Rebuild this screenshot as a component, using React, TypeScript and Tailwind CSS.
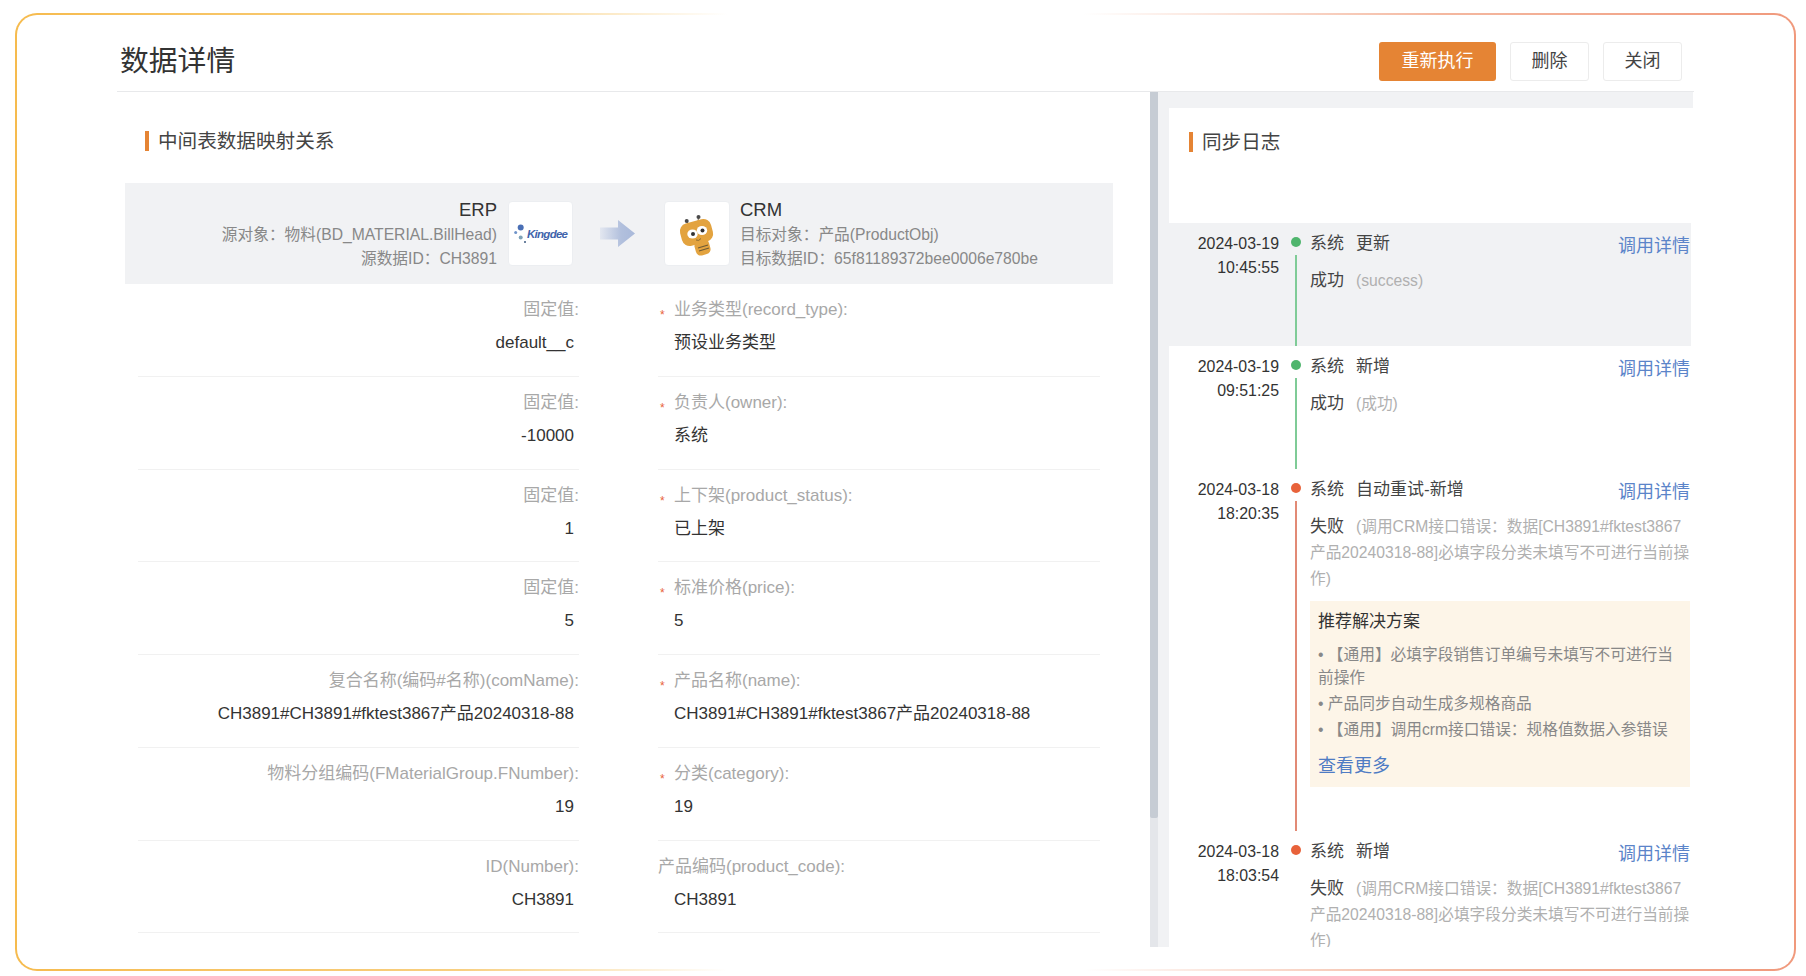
import { ReactNode } from "react";

const FONT = "font-['Liberation_Sans','Noto_Sans_CJK_SC',sans-serif]";

type Row = { label: string; value: string; target: string; targetValue: string; required?: boolean };

const rows: Row[] = [
  { label: "固定值:", value: "default__c", target: "业务类型(record_type):", targetValue: "预设业务类型", required: true },
  { label: "固定值:", value: "-10000", target: "负责人(owner):", targetValue: "系统", required: true },
  { label: "固定值:", value: "1", target: "上下架(product_status):", targetValue: "已上架", required: true },
  { label: "固定值:", value: "5", target: "标准价格(price):", targetValue: "5", required: true },
  {
    label: "复合名称(编码#名称)(comName):",
    value: "CH3891#CH3891#fktest3867产品20240318-88",
    target: "产品名称(name):",
    targetValue: "CH3891#CH3891#fktest3867产品20240318-88",
    required: true,
  },
  { label: "物料分组编码(FMaterialGroup.FNumber):", value: "19", target: "分类(category):", targetValue: "19", required: true },
  { label: "ID(Number):", value: "CH3891", target: "产品编码(product_code):", targetValue: "CH3891" },
];

// 按参考图的折行拆开
const errorLines = ["(调用CRM接口错误:数据[CH3891#fktest3867", "产品20240318-88]必填字段分类未填写不可进行当前操", "作)"].map((l) =>
  l.replace("错误:", "错误\uFF1A"),
);

function SectionTitle({ children }: { children: ReactNode }) {
  return (
    <div className="flex items-center gap-[9px] text-[19.6px] leading-[20px] text-[#444]">
      <span className="h-[20px] w-[4px] bg-[#e58434]" />
      {children}
    </div>
  );
}

function KingdeeLogo() {
  return (
    <svg width="65" height="65" viewBox="0 0 65 65">
      <circle cx="11.7" cy="25.5" r="3" fill="#4a6fb5" />
      <circle cx="6.7" cy="30.5" r="1.5" fill="#6f93c9" />
      <circle cx="11.7" cy="35.5" r="2" fill="#7fa3b8" />
      <circle cx="16" cy="40" r="1" fill="#3d5a80" />
      <text x="18" y="36" fontSize="11.5" fontWeight="700" fontStyle="italic" fill="#3f64ab" fontFamily="Liberation Sans, sans-serif" textLength="41">
        Kingdee
      </text>
    </svg>
  );
}

function BeeLogo() {
  return (
    <svg width="66" height="65" viewBox="0 0 66 65">
      <path d="M23 22 L22 18 M33 20 L33.5 15" stroke="#7a6a50" strokeWidth="1" />
      <circle cx="21.7" cy="19" r="2" fill="#4a4a4a" />
      <circle cx="33.5" cy="15" r="2" fill="#4a4a4a" />
      <rect x="15.5" y="19" width="32" height="23" rx="8" transform="rotate(-15 31.5 30.5)" fill="#e3a33f" />
      <rect x="30" y="38" width="15" height="15" rx="5" transform="rotate(-15 37.5 45.5)" fill="#e3a33f" />
      <path d="M33 46 L43 43 M34 49 L44 46" stroke="#6f5a34" strokeWidth="1.2" />
      <ellipse cx="27.5" cy="32" rx="5.2" ry="4.6" fill="#fff" />
      <ellipse cx="37" cy="28.5" rx="5.2" ry="4.6" fill="#fff" />
      <circle cx="28" cy="32" r="2" fill="#333" />
      <circle cx="37.5" cy="28.5" r="2" fill="#333" />
      <path d="M31 38 Q34 39.5 36 36.5" stroke="#8a6a30" strokeWidth="1" fill="none" />
    </svg>
  );
}

function FlowArrow() {
  return (
    <svg width="36" height="27" viewBox="0 0 36 27">
      <defs>
        <linearGradient id="arrow-fade" x1="0" x2="1" y1="0" y2="0">
          <stop offset="0" stopColor="#e3e7f0" />
          <stop offset="0.6" stopColor="#b2c0dd" />
          <stop offset="1" stopColor="#a9b9da" />
        </linearGradient>
      </defs>
      <path d="M0 7.5 H18 V0 L35 13.5 L18 27 V19.5 H0 Z" fill="url(#arrow-fade)" />
    </svg>
  );
}

function LogoBox({ children, wide }: { children: ReactNode; wide?: boolean }) {
  return (
    <div className={`h-[65px] shrink-0 rounded-[4px] border border-[#eceef1] bg-white ${wide ? "w-[66px]" : "w-[65px]"}`}>
      {children}
    </div>
  );
}

function MappingBanner() {
  return (
    <div className="ml-[8px] flex h-[101px] w-[988px] items-center bg-[#f1f2f4] text-[15.7px]">
      <div className="w-[372px] pt-[2px] text-right leading-[24px] text-[#888]">
        <div className="mb-[1px] text-[18.5px] text-[#333]">ERP</div>
        <div>{"源对象\uFF1A物料(BD_MATERIAL.BillHead)"}</div>
        <div>{"源数据ID\uFF1ACH3891"}</div>
      </div>
      <div className="ml-[11px]">
        <LogoBox>
          <KingdeeLogo />
        </LogoBox>
      </div>
      <div className="ml-[27px] mr-[28px] flex">
        <FlowArrow />
      </div>
      <LogoBox wide>
        <BeeLogo />
      </LogoBox>
      <div className="ml-[10px] pt-[2px] leading-[24px] text-[#888]">
        <div className="mb-[1px] text-[18.5px] text-[#333]">CRM</div>
        <div>{"目标对象\uFF1A产品(ProductObj)"}</div>
        <div>{"目标数据ID\uFF1A65f81189372bee0006e780be"}</div>
      </div>
    </div>
  );
}

function MappingRow({ row }: { row: Row }) {
  return (
    <div className="flex h-[92.75px] shrink-0 gap-[79px] pl-[21px] text-[17px] leading-[24px]">
      <div className="w-[441px] border-b border-[#f1f1f1] pt-[14px] text-right">
        <div className="text-[#a8a8a8]">{row.label}</div>
        <div className="mt-[9px] pr-[5px] text-[#333]">{row.value}</div>
      </div>
      <div className="w-[442px] border-b border-[#f1f1f1] pt-[14px]">
        <div className="flex text-[#a8a8a8]">
          {row.required && <span className="w-[16px] translate-y-[5px] pl-[2px] text-[12px] text-[#e8623a]">*</span>}
          {row.target}
        </div>
        <div className="mt-[9px] pl-[16px] text-[#333]">{row.targetValue}</div>
      </div>
    </div>
  );
}

type LogEntry = {
  date: string;
  time: string;
  action: string;
  status: string;
  detail: string[];
  ok: boolean;
  active?: boolean;
  solution?: boolean;
  last?: boolean;
  height: string;
};

const logs: LogEntry[] = [
  { date: "2024-03-19", time: "10:45:55", action: "更新", status: "成功", detail: ["(success)"], ok: true, active: true, height: "h-[123px]" },
  { date: "2024-03-19", time: "09:51:25", action: "新增", status: "成功", detail: ["(成功)"], ok: true, height: "h-[123px]" },
  { date: "2024-03-18", time: "18:20:35", action: "自动重试-新增", status: "失败", detail: errorLines, ok: false, solution: true, height: "h-[362px]" },
  { date: "2024-03-18", time: "18:03:54", action: "新增", status: "失败", detail: errorLines, ok: false, last: true, height: "h-[123px]" },
];

function SolutionBox() {
  return (
    <div className="mt-[9px] bg-[#fdf5e8] px-[8px] pb-[9px] pt-[9px] text-[15.7px] leading-[23px] text-[#888]">
      <div className="text-[17px] leading-[24px] text-[#333]">推荐解决方案</div>
      <ul className="mt-[9px] space-y-[3px]">
        <li>• 【通用】必填字段销售订单编号未填写不可进行当前操作</li>
        <li>• 产品同步自动生成多规格商品</li>
        <li>{"• 【通用】调用crm接口错误\uFF1A规格值数据入参错误"}</li>
      </ul>
      <div className="mt-[13px] text-[18px] leading-[24px] text-[#4f7cc4]">查看更多</div>
    </div>
  );
}

function LogItem({ log }: { log: LogEntry }) {
  const [first, ...rest] = log.detail;
  return (
    <div className={`flex w-[522px] shrink-0 pt-[9px] ${log.height} ${log.active ? "bg-[#f1f2f4]" : ""}`}>
      <div className="w-[110px] shrink-0 text-right text-[15.9px] leading-[24px] text-[#333]">
        <div>{log.date}</div>
        <div>{log.time}</div>
      </div>
      <div className="flex w-[31px] shrink-0 flex-col items-center pl-[2px] pt-[5px]">
        <span className={`h-[10px] w-[10px] rounded-full ${log.ok ? "bg-[#4fb56d]" : "bg-[#e8623a]"}`} />
        {!log.last && <span className={`mt-[8px] w-[2px] flex-1 ${log.ok ? "bg-[#7fcb97]" : "bg-[#e28a75]"}`} />}
      </div>
      <div className="w-[380px] shrink-0">
        <div className="flex justify-between text-[17px] leading-[24px] text-[#444]">
          <div className="flex gap-[12px]">
            <span>系统</span>
            <span>{log.action}</span>
          </div>
          <span className="translate-y-[2px] text-[18px] text-[#5b84c9]">调用详情</span>
        </div>
        <div className="mt-[12px] whitespace-nowrap text-[15.7px] leading-[26px] text-[#b0b0b0]">
          <div className="flex gap-[12px]">
            <span className="text-[17px] text-[#444]">{log.status}</span>
            <span>{first}</span>
          </div>
          {rest.map((line) => (
            <div key={line}>{line}</div>
          ))}
        </div>
        {log.solution && <SolutionBox />}
      </div>
    </div>
  );
}

export default function App() {
  return (
    <div className={`h-[976px] w-[1806px] overflow-hidden bg-white pl-[15px] pt-[13px] ${FONT}`}>
      <div className="h-[958px] w-[1781px] rounded-[22px] bg-[linear-gradient(90deg,#f6bb4e_0%,#f8cf80_25%,#ffffff_40%,#ffffff_60%,#f4b8a0_80%,#f0997c_100%)] p-[2px]">
        <div className="h-full rounded-[20px] bg-white px-[100px]">
          <div className="flex h-[77px] items-start justify-between border-b border-[#e8e9eb] pl-[3px] pr-[12px] pt-[27px]">
            <h1 className="mt-[1px] text-[28.8px] font-normal leading-[36px] text-[#333]">数据详情</h1>
            <div className="flex gap-[14px] text-[18px]">
              <button className="h-[39px] w-[117px] rounded-[3px] bg-[#e58434] text-white">重新执行</button>
              <button className="h-[39px] w-[79px] rounded-[3px] border border-[#ececec] text-[#444]">删除</button>
              <button className="h-[39px] w-[79px] rounded-[3px] border border-[#ececec] text-[#444]">关闭</button>
            </div>
          </div>

          <div className="flex h-[855px]">
            <div className="h-full w-[1033px] shrink-0 overflow-hidden">
              <div className="pb-[32px] pl-[28px] pt-[39px]">
                <SectionTitle>中间表数据映射关系</SectionTitle>
              </div>
              <MappingBanner />
              {rows.map((row) => (
                <MappingRow key={row.target} row={row} />
              ))}
            </div>

            <div className="flex h-full w-[19px] shrink-0 bg-[#f1f2f4]">
              <div className="h-full w-[8px] bg-[#e4e6ea]">
                <div className="h-[726px] w-full rounded-b-[2px] bg-[#c6ccd4]" />
              </div>
            </div>

            <div className="flex h-full w-[524px] shrink-0 flex-col overflow-hidden">
              <div className="h-[16px] shrink-0 bg-[#f1f2f4]" />
              <div className="h-[115px] shrink-0 pl-[20px] pt-[24px]">
                <SectionTitle>同步日志</SectionTitle>
              </div>
              {logs.map((log) => (
                <LogItem key={log.time} log={log} />
              ))}
            </div>
          </div>
        </div>
      </div>
    </div>
  );
}
